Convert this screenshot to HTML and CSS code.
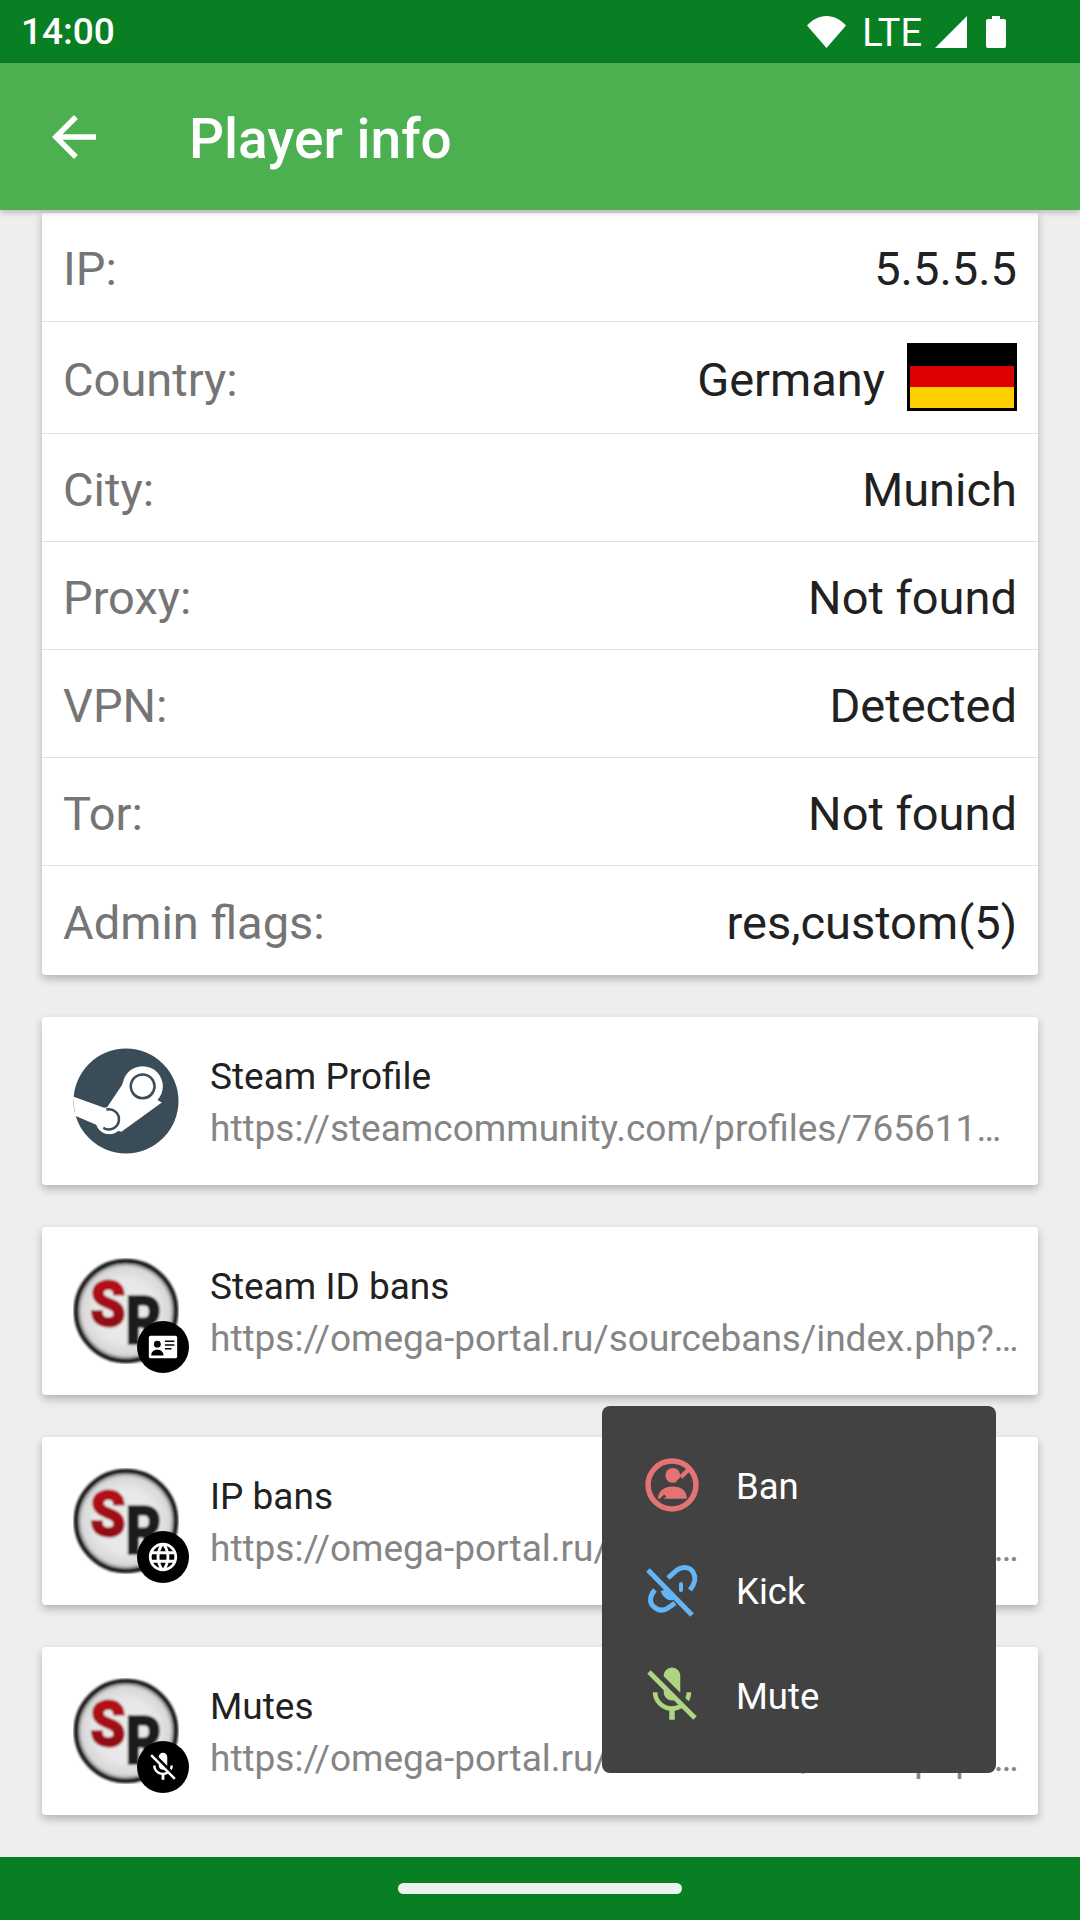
FILE: index.html
```html
<!DOCTYPE html>
<html lang="en">
<head>
    <meta charset="UTF-8">
    <meta name="viewport" content="width=device-width, initial-scale=1.0">
    <title>Player info</title>
    <link rel="stylesheet" href="styles.css">
</head>
<body>
    <svg class="defs" aria-hidden="true">
        <defs>
            <radialGradient id="discFill">
                <stop offset="0.6" stop-color="#e8e8e8"/>
                <stop offset="0.88" stop-color="#d8d8d8"/>
                <stop offset="1" stop-color="#666"/>
            </radialGradient>
            <linearGradient id="redFill" x1="0" y1="0" x2="0" y2="1">
                <stop offset="0" stop-color="#cc1018"/>
                <stop offset="1" stop-color="#7c0c10"/>
            </linearGradient>
            <filter id="soft"><feGaussianBlur stdDeviation="1"/></filter>
            <symbol id="sbLogo" viewBox="0 0 105 105">
                <g filter="url(#soft)">
                    <circle cx="52.5" cy="52.5" r="49.5" fill="url(#discFill)" stroke="#1e1e1e" stroke-width="4.5"/>
                    <text x="17" y="67" class="logo-s" textLength="35" lengthAdjust="spacingAndGlyphs">S</text>
                    <text x="52" y="85" class="logo-r" textLength="36" lengthAdjust="spacingAndGlyphs">R</text>
                </g>
            </symbol>
        </defs>
    </svg>

    <div class="screen">
        <div class="status-bar">
            <span class="clock">14:00</span>
            <div class="status-icons">
                <svg class="wifi" viewBox="0 0 39 32"><path d="M19.5 32 0 9.5C5 4 12 0 19.5 0S34 4 39 9.5z"/></svg>
                <span class="lte">LTE</span>
                <svg class="signal" viewBox="0 0 32 32"><path d="M32 0v32H0z"/></svg>
                <svg class="battery" viewBox="0 0 20 32"><path d="M6 0h8v3h4a2 2 0 0 1 2 2v25a2 2 0 0 1-2 2H2a2 2 0 0 1-2-2V5a2 2 0 0 1 2-2h4z"/></svg>
            </div>
        </div>

        <header class="app-bar">
            <svg class="back" viewBox="0 0 24 24"><path d="M20 11H7.83l5.59-5.59L12 4l-8 8 8 8 1.41-1.41L7.83 13H20v-2z"/></svg>
            <h1>Player info</h1>
        </header>

        <main class="content">
            <section class="card info-card">
                <div class="info-row"><span class="label">IP:</span><span class="value">5.5.5.5</span></div>
                <div class="info-row country-row">
                    <span class="label">Country:</span>
                    <span class="value">Germany</span>
                    <div class="flag"><i class="red"></i><i class="gold"></i></div>
                </div>
                <div class="info-row"><span class="label">City:</span><span class="value">Munich</span></div>
                <div class="info-row"><span class="label">Proxy:</span><span class="value">Not found</span></div>
                <div class="info-row"><span class="label">VPN:</span><span class="value">Detected</span></div>
                <div class="info-row"><span class="label">Tor:</span><span class="value">Not found</span></div>
                <div class="info-row"><span class="label">Admin flags:</span><span class="value">res,custom(5)</span></div>
            </section>

            <a class="card link-card">
                <div class="logo">
                    <svg viewBox="0 0 105 105">
                        <circle cx="52.5" cy="52.5" r="52" fill="#3a4c58"/>
                        <path d="M0 48 33 60 51 33 88 54 48 83 23 76 2 67z" fill="#fff"/>
                        <circle cx="69" cy="38" r="20" fill="#fff"/>
                        <circle cx="36" cy="72" r="13.500" fill="#fff"/>
                        <circle cx="69" cy="38" r="13" fill="#3a4c58"/>
                        <circle cx="69" cy="38" r="10.500" fill="#fff"/>
                        <path d="M33 61a10 10 0 1 1 -3 18" fill="none" stroke="#3a4c58" stroke-width="2.500"/>
                    </svg>
                </div>
                <div class="link-text">
                    <div class="link-title">Steam Profile</div>
                    <div class="link-url">https://steamcommunity.com/profiles/76561198012345678</div>
                </div>
            </a>

            <a class="card link-card">
                <div class="logo">
                    <svg viewBox="0 0 105 105"><use href="#sbLogo"/></svg>
                    <div class="badge">
                        <svg viewBox="0 0 36 36">
                            <rect x="3" y="6" width="30" height="24" rx="2" fill="#fff"/>
                            <circle cx="12" cy="15" r="3.6" fill="#000"/>
                            <path d="M5.5 27c0-4 3-6 6.500-6s6.500 2 6.500 6z" fill="#000"/>
                            <path d="M20 11h10v1.600H20zM20 15h10v1.600H20zM20 19h7v1.600h-7z" fill="#000"/>
                        </svg>
                    </div>
                </div>
                <div class="link-text">
                    <div class="link-title">Steam ID bans</div>
                    <div class="link-url">https://omega-portal.ru/sourcebans/index.php?p=banlist&amp;advSearch</div>
                </div>
            </a>

            <a class="card link-card">
                <div class="logo">
                    <svg viewBox="0 0 105 105"><use href="#sbLogo"/></svg>
                    <div class="badge">
                        <svg viewBox="0 0 24 24" fill="#fff"><path d="M11.99 2C6.47 2 2 6.48 2 12s4.470 10 9.990 10C17.520 22 22 17.520 22 12S17.520 2 11.990 2zm6.930 6h-2.950c-.32-1.250-.78-2.450-1.380-3.560 1.840.63 3.370 1.910 4.330 3.560zM12 4.040c.83 1.200 1.480 2.530 1.910 3.960h-3.820c.43-1.430 1.080-2.760 1.910-3.960zM4.260 14C4.100 13.360 4 12.690 4 12s.1-1.360.26-2h3.380c-.08.66-.14 1.320-.14 2 0 .68.06 1.340.14 2H4.260zm.82 2h2.950c.32 1.250.78 2.450 1.380 3.560-1.840-.63-3.370-1.900-4.330-3.560zm2.950-8H5.080c.96-1.660 2.490-2.930 4.330-3.560C8.810 5.550 8.350 6.750 8.030 8zM12 19.960c-.83-1.200-1.480-2.530-1.910-3.960h3.820c-.43 1.430-1.080 2.760-1.910 3.960zM14.340 14H9.660c-.09-.66-.16-1.320-.16-2 0-.68.07-1.350.16-2h4.680c.09.650.16 1.320.16 2 0 .68-.07 1.340-.16 2zm.25 5.560c.6-1.110 1.060-2.310 1.380-3.560h2.950c-.96 1.650-2.490 2.930-4.330 3.560zM16.360 14c.08-.66.14-1.320.14-2 0-.68-.06-1.340-.14-2h3.380c.16.640.26 1.310.26 2s-.1 1.360-.26 2h-3.380z"/></svg>
                    </div>
                </div>
                <div class="link-text">
                    <div class="link-title">IP bans</div>
                    <div class="link-url">https://omega-portal.ru/sourcebans/index.php?p=banlist&amp;advSearch</div>
                </div>
            </a>

            <a class="card link-card">
                <div class="logo">
                    <svg viewBox="0 0 105 105"><use href="#sbLogo"/></svg>
                    <div class="badge">
                        <svg viewBox="0 0 24 24" fill="#fff"><path d="M19 11h-1.700c0 .74-.16 1.430-.43 2.050l1.230 1.230c.56-.98.9-2.090.9-3.280zm-4.020.17c0-.06.02-.11.02-.17V5c0-1.660-1.340-3-3-3S9 3.340 9 5v.18l5.980 5.990zM4.270 3L3 4.270l6.010 6.010V11c0 1.660 1.330 3 2.990 3 .22 0 .44-.03.65-.08l1.660 1.660c-.71.33-1.500.52-2.310.52-2.760 0-5.300-2.100-5.300-5.100H5c0 3.410 2.720 6.230 6 6.720V21h2v-3.280c.91-.13 1.770-.45 2.540-.9L19.730 21 21 19.730 4.270 3z"/></svg>
                    </div>
                </div>
                <div class="link-text">
                    <div class="link-title">Mutes</div>
                    <div class="link-url">https://omega-portal.ru/sourcebans/index.php?p=commslist&amp;advSearch</div>
                </div>
            </a>
        </main>

        <nav class="nav-bar"><div class="home-pill"></div></nav>

        <div class="popup">
            <div class="popup-item">
                <svg class="popup-icon" viewBox="0 0 24 24">
                    <circle cx="12.300" cy="8.500" r="2.700" fill="#e57373"/>
                    <path d="M6.900 17c0-3 2.400-4.500 5.400-4.500s5.100 1.500 5.100 4.500z" fill="#e57373"/>
                    <path d="M17 8 13.800 11.200M9.500 15.800 6.500 18.800" stroke="#424242" stroke-width="1"/>
                    <path d="M18.600 5.800 15.200 9.200" stroke="#e57373" stroke-width="1.600"/>
                    <circle cx="12" cy="12" r="8.700" fill="none" stroke="#e57373" stroke-width="2"/>
                </svg>
                <span>Ban</span>
            </div>
            <div class="popup-item">
                <svg class="popup-icon" viewBox="-1 2 66 66" fill="none" stroke="#64b5f6">
                    <path d="M28 23 37 15C43 11 50 12 53 17S56 27 50 35" stroke-width="5"/>
                    <path d="M15 35C10 40 9 47 13 51S22 57 28 53L35 48" stroke-width="5"/>
                    <path d="M24 35C26 41 30 43 34 41" stroke-width="7"/>
                    <path d="M41 29 41 35" stroke-width="4" stroke-linecap="round"/>
                    <path d="M8 15 52 60" stroke-width="5"/>
                </svg>
                <span>Kick</span>
            </div>
            <div class="popup-item">
                <svg class="popup-icon" viewBox="0 0 24 24" fill="#aed581"><path d="M19 11h-1.700c0 .74-.16 1.430-.43 2.050l1.230 1.230c.56-.98.9-2.090.9-3.280zm-4.020.17c0-.06.02-.11.02-.17V5c0-1.660-1.340-3-3-3S9 3.340 9 5v.18l5.980 5.990zM4.270 3L3 4.270l6.010 6.010V11c0 1.660 1.330 3 2.990 3 .22 0 .44-.03.65-.08l1.660 1.660c-.71.33-1.500.52-2.310.52-2.760 0-5.300-2.100-5.300-5.100H5c0 3.410 2.720 6.230 6 6.720V21h2v-3.280c.91-.13 1.770-.45 2.540-.9L19.730 21 21 19.730 4.270 3z"/></svg>
                <span>Mute</span>
            </div>
        </div>
    </div>
</body>
</html>
```

FILE: styles.css
```css
body {
    margin: 0;
    font-family: Roboto, sans-serif;
    background-color: #eeeeee;
}

.defs {
    position: absolute;
    width: 0;
    height: 0;
}

.screen {
    position: relative;
    width: 1080px;
    height: 1920px;
    display: flex;
    flex-direction: column;
    overflow: hidden;
}

.status-bar {
    height: 63px;
    background-color: #087f23;
    color: #fff;
    display: flex;
    align-items: center;
    justify-content: space-between;
    padding: 0 74px 0 21px;
    flex-shrink: 0;
}

.clock {
    font-size: 37px;
    font-weight: 500;
}

.status-icons {
    display: flex;
    align-items: center;
}

.status-icons svg {
    fill: #fff;
    height: 32px;
    display: block;
}

.wifi {
    width: 39px;
}

.lte {
    font-size: 38px;
    font-weight: 400;
    margin: 0 13px 0 16px;
    line-height: 32px;
    padding-top: 2px;
}

.signal {
    width: 32px;
}

.battery {
    width: 20px;
    margin-left: 19px;
}

.app-bar {
    position: relative;
    z-index: 2;
    height: 147px;
    background-color: #4caf50;
    display: flex;
    align-items: center;
    box-shadow: 0 2px 6px rgba(0, 0, 0, 0.25);
    flex-shrink: 0;
}

.back {
    width: 66px;
    height: 66px;
    fill: #fff;
    margin-left: 41px;
}

h1 {
    margin: 4px 0 0 82px;
    color: #fff;
    font-size: 55px;
    font-weight: 500;
}

.content {
    flex: 1;
    display: flex;
    flex-direction: column;
    gap: 42px;
    padding: 2px 42px 0;
}

.card {
    background-color: #fff;
    border-radius: 4px;
    box-shadow: 0 4px 8px rgba(0, 0, 0, 0.25);
}

.info-card {
    border-radius: 0 0 4px 4px;
    border-top: 1px solid #e0e0e0;
}

.info-row {
    height: 108px;
    display: flex;
    align-items: center;
    padding: 0 21px;
    font-size: 47px;
    box-sizing: border-box;
    border-bottom: 1px solid #e0e0e0;
}

.info-row:first-child {
    height: 109px;
}

.info-row:last-child {
    border-bottom: none;
    height: 109px;
}

.country-row {
    height: 112px;
}

.label {
    color: #757575;
    margin-right: auto;
    padding-top: 3px;
}

.value {
    color: #212121;
    padding-top: 3px;
}

.flag {
    width: 110px;
    height: 68px;
    box-sizing: border-box;
    border: 3px solid #000;
    border-top-width: 23px;
    margin: 0 0 2px 22px;
    display: flex;
    flex-direction: column;
}

.flag i {
    flex: 1;
}

.flag .red {
    background-color: #dd0000;
}

.flag .gold {
    background-color: #ffce00;
}

.link-card {
    height: 168px;
    display: flex;
    align-items: center;
    padding: 0 18px 0 31px;
    box-sizing: border-box;
}

.logo {
    position: relative;
    width: 106px;
    height: 106px;
    flex-shrink: 0;
}

.logo > svg {
    display: block;
    width: 106px;
    height: 106px;
}

.logo-s {
    font-family: Roboto, sans-serif;
    font-weight: 900;
    font-size: 63px;
    fill: url(#redFill);
    stroke: #a01015;
    stroke-width: 2px;
    stroke-linejoin: miter;
}

.logo-r {
    font-family: Roboto, sans-serif;
    font-weight: 900;
    font-size: 66px;
    fill: #1c1c1c;
    stroke: #1c1c1c;
    stroke-width: 1.5px;
    stroke-linejoin: miter;
}

.badge {
    position: absolute;
    right: -10px;
    bottom: -9px;
    width: 52px;
    height: 52px;
    border-radius: 50%;
    background-color: #000;
    display: flex;
    align-items: center;
    justify-content: center;
}

.badge svg {
    width: 34px;
    height: 34px;
}

.link-text {
    margin-left: 31px;
    padding-top: 4px;
    min-width: 0;
    flex: 1;
}

.link-title {
    font-size: 37px;
    color: #212121;
    line-height: 52px;
}

.link-url {
    font-size: 37px;
    color: #858585;
    line-height: 52px;
    white-space: nowrap;
    overflow: hidden;
    text-overflow: ellipsis;
}

.popup {
    position: absolute;
    z-index: 3;
    left: 602px;
    top: 1406px;
    width: 394px;
    height: 367px;
    box-sizing: border-box;
    padding: 26px 37px;
    background-color: #424242;
    border-radius: 8px;
    color: #fff;
}

.popup-item {
    height: 105px;
    display: flex;
    align-items: center;
    font-size: 36.5px;
}

.popup-item span {
    padding-top: 4px;
}

.popup-icon {
    width: 66px;
    height: 66px;
    margin-right: 31px;
    flex-shrink: 0;
}

.nav-bar {
    height: 63px;
    background-color: #087f23;
    display: flex;
    align-items: center;
    justify-content: center;
    flex-shrink: 0;
}

.home-pill {
    width: 284px;
    height: 11px;
    border-radius: 6px;
    background-color: #eaf3ee;
}
```
